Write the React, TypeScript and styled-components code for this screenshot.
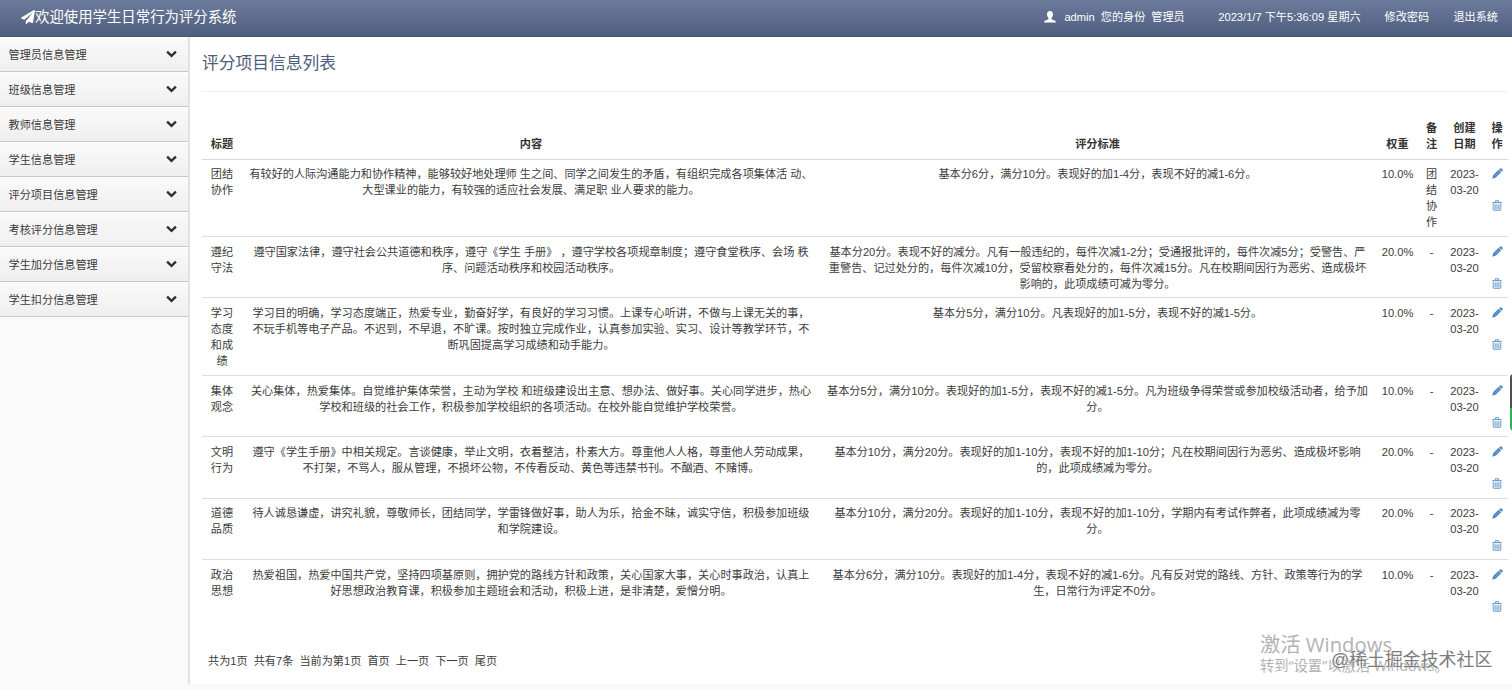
import React from 'react';
import styled, { createGlobalStyle } from 'styled-components';
import { FaPaperPlane } from 'react-icons/fa';

const GlobalStyle = createGlobalStyle`
  * { box-sizing: border-box; }
  html, body { margin: 0; padding: 0; }
  body {
    background: #fafafa;
    color: #3c3c3c;
    font-family: "Liberation Sans", "Noto Sans CJK SC", sans-serif;
    font-size: 11.15px;
    line-height: 16px;
    overflow: hidden;
  }
`;

const Page = styled.div`
  position: relative;
  display: flex;
  flex-direction: column;
  width: 1512px;
  height: 690px;
  overflow: hidden;
`;

const TopBar = styled.header`
  display: flex;
  flex: none;
  align-items: center;
  justify-content: space-between;
  height: 37px;
  padding: 0 14px 3px 21px;
  color: #fff;
  background: linear-gradient(to bottom, #6c7b9c, #505e7f);
  border-bottom: 1px solid #47536f;
`;

const Brand = styled.div`
  display: flex;
  align-items: center;
  font-size: 14.4px;
  white-space: nowrap;
`;

const UserNav = styled.nav`
  display: flex;
  align-items: center;
  white-space: nowrap;
`;

const NavText = styled.span<{ $gap: number }>`
  margin-left: ${(p) => p.$gap}px;
`;

const Body = styled.div`
  display: flex;
  flex: none;
  height: 647px;
`;

const Sidebar = styled.aside`
  flex: none;
  width: 190px;
  background: #fafafa;
  border-right: 2px solid #e2e2e2;
`;

const MenuItem = styled.div`
  display: flex;
  align-items: center;
  justify-content: space-between;
  height: 35.05px;
  padding: 1px 11px 0 8.6px;
  background: linear-gradient(to bottom, #fafafa, #efefef);
  border-bottom: 1px solid #c8c8c8;
  box-shadow: inset 0 1px 0 #fff;
`;

const Content = styled.main`
  flex: 1;
  padding: 14px 4px 0 12px;
  background: #fff;
`;

const Title = styled.h1`
  height: 40.5px;
  margin: 0;
  color: #505d7d;
  font-size: 16.75px;
  font-weight: 400;
  line-height: 25px;
  border-bottom: 1px solid #f0f0f0;
`;

const Table = styled.table`
  width: 1306px;
  margin-top: 21.5px;
  table-layout: fixed;
  border-collapse: separate;
  border-spacing: 0;
  text-align: center;
`;

const HeadCell = styled.th`
  height: 46.5px;
  padding: 0 0 7px;
  color: #333;
  font-weight: 700;
  vertical-align: bottom;
  border-bottom: 1px solid #d9d9d9;
`;

const Row = styled.tr<{ $height: number }>`
  height: ${(p) => p.$height}px;
`;

const Cell = styled.td<{ $last?: boolean }>`
  padding: 6.8px 0 0;
  vertical-align: top;
  white-space: nowrap;
  border-bottom: 1px solid ${(p) => (p.$last ? 'transparent' : '#dedede')};
`;

const Line = styled.div`
  display: flex;
  justify-content: center;
  height: 16px;
  white-space: pre;
`;

const Actions = styled.div`
  display: flex;
  flex-direction: column;
  align-items: center;
  gap: 21px;
  padding-top: 2.2px;
  color: #4a86c5;
`;

const Pager = styled.div`
  display: flex;
  gap: 6.1px;
  margin: 31.5px 0 0 6px;
`;

const Activation = styled.div`
  position: absolute;
  left: 1260px;
  top: 631px;
  color: #b2b2b2;
  font-family: "Open Sans", "Noto Sans CJK SC", sans-serif;
  white-space: nowrap;
`;

const ActivationTitle = styled.div`
  font-size: 20.3px;
  line-height: 26px;
`;

const ActivationHint = styled.div`
  font-size: 14.3px;
  line-height: 18px;
`;

const Community = styled.div`
  position: absolute;
  left: 1331px;
  top: 647px;
  color: #7c7c7c;
  font-size: 17.9px;
  line-height: 26px;
  white-space: nowrap;
  text-shadow: 0 0 1px #fff;
`;

const EdgeWidget = styled.div`
  position: absolute;
  left: 1510px;
  top: 374px;
  width: 4px;
  height: 57px;
  border-radius: 4px 0 0 4px;
  background: linear-gradient(to bottom, #505050 0 60%, #2fb457 60%);
`;

const UserIcon = () => (
  <svg width="12" height="12" viewBox="0 0 12 12" fill="currentColor">
    <path d="M6 0C4.1 0 3 1.3 3 3.4C3 5 3.7 6.1 4.5 6.8V8C4.3 8.5 3.3 8.8 2.1 9.3C0.8 9.8 0.1 10.1 0 11.6H12C11.9 10.1 11.2 9.8 9.9 9.3C8.7 8.8 7.7 8.5 7.5 8V6.8C8.3 6.1 9 5 9 3.4C9 1.3 7.9 0 6 0Z" />
  </svg>
);

const ChevronIcon = () => (
  <svg width="11" height="10" viewBox="0 0 11 10" fill="none" stroke="#2f2f2f">
    <path d="M1.1 1.6L5.5 5.9L9.9 1.6" strokeWidth="2.3" />
  </svg>
);

const PencilIcon = () => (
  <svg width="11" height="11" viewBox="0 0 11 11" fill="currentColor">
    <path d="M8 0.5Q8.7 -0.1 9.4 0.5L10.5 1.6Q11 2.2 10.5 2.9L9.5 3.8L7.1 1.4Z" />
    <path d="M6.6 1.8L9.1 4.3L3.9 9.6L0.2 10.8L1.3 7.1Z" />
    <path d="M3 7.9L7.3 3.6" stroke="#a8c8e8" strokeWidth="0.5" />
  </svg>
);

const TrashIcon = () => (
  <svg width="10" height="11" viewBox="0 0 10 11" fill="none" stroke="#5f95cc">
    <path d="M3.3 2V0.8H6.7V2M0.3 2.6H9.7" strokeWidth="1" />
    <path d="M1.2 3.4V9.6Q1.2 10.3 1.9 10.3H8.1Q8.8 10.3 8.8 9.6V3.4" strokeWidth="0.9" fill="#dce8f5" />
    <path d="M3.3 4.5V9M5 4.5V9M6.7 4.5V9" strokeWidth="0.7" />
  </svg>
);

const menu = [
  '管理员信息管理',
  '班级信息管理',
  '教师信息管理',
  '学生信息管理',
  '评分项目信息管理',
  '考核评分信息管理',
  '学生加分信息管理',
  '学生扣分信息管理',
];

const columns: { width: number; label: string[] }[] = [
  { width: 40, label: ['标题'] },
  { width: 578, label: ['内容'] },
  { width: 555, label: ['评分标准'] },
  { width: 45, label: ['权重'] },
  { width: 23, label: ['备', '注'] },
  { width: 43, label: ['创建', '日期'] },
  { width: 22, label: ['操', '作'] },
];

interface Item {
  height: number;
  title: string[];
  content: string[];
  standard: string[];
  weight: string;
  note: string[];
}

const items: Item[] = [
  {
    height: 77.6,
    title: ['团结', '协作'],
    content: [
      '有较好的人际沟通能力和协作精神，能够较好地处理师 生之间、同学之间发生的矛盾，有组织完成各项集体活 动、',
      '大型课业的能力，有较强的适应社会发展、满足职 业人要求的能力。',
    ],
    standard: ['基本分6分，满分10分。表现好的加1-4分，表现不好的减1-6分。'],
    weight: '10.0%',
    note: ['团', '结', '协', '作'],
  },
  {
    height: 61.4,
    title: ['遵纪', '守法'],
    content: [
      '遵守国家法律，遵守社会公共道德和秩序，遵守《学生 手册》 ，遵守学校各项规章制度；遵守食堂秩序、会场 秩',
      '序、问题活动秩序和校园活动秩序。',
    ],
    standard: [
      '基本分20分。表现不好的减分。凡有一般违纪的，每件次减1-2分；受通报批评的，每件次减5分；受警告、严',
      '重警告、记过处分的，每件次减10分，受留校察看处分的，每件次减15分。凡在校期间因行为恶劣、造成极坏',
      '影响的，此项成绩可减为零分。',
    ],
    weight: '20.0%',
    note: ['-'],
  },
  {
    height: 77.4,
    title: ['学习', '态度', '和成', '绩'],
    content: [
      '学习目的明确，学习态度端正，热爱专业，勤奋好学，有良好的学习习惯。上课专心听讲，不做与上课无关的事，',
      '不玩手机等电子产品。不迟到，不早退，不旷课。按时独立完成作业，认真参加实验、实习、设计等教学环节，不',
      '断巩固提高学习成绩和动手能力。',
    ],
    standard: ['基本分5分，满分10分。凡表现好的加1-5分，表现不好的减1-5分。'],
    weight: '10.0%',
    note: ['-'],
  },
  {
    height: 61.4,
    title: ['集体', '观念'],
    content: [
      '关心集体，热爱集体。自觉维护集体荣誉，主动为学校 和班级建设出主意、想办法、做好事。关心同学进步，热心',
      '学校和班级的社会工作，积极参加学校组织的各项活动。在校外能自觉维护学校荣誉。',
    ],
    standard: [
      '基本分5分，满分10分。表现好的加1-5分，表现不好的减1-5分。凡为班级争得荣誉或参加校级活动者，给予加',
      '分。',
    ],
    weight: '10.0%',
    note: ['-'],
  },
  {
    height: 61.4,
    title: ['文明', '行为'],
    content: [
      '遵守《学生手册》中相关规定。言谈健康，举止文明，衣着整洁，朴素大方。尊重他人人格，尊重他人劳动成果，',
      '不打架，不骂人，服从管理，不损坏公物，不传看反动、黄色等违禁书刊。不酗酒、不赌博。',
    ],
    standard: [
      '基本分10分，满分20分。表现好的加1-10分，表现不好的加1-10分；凡在校期间因行为恶劣、造成极坏影响',
      '的，此项成绩减为零分。',
    ],
    weight: '20.0%',
    note: ['-'],
  },
  {
    height: 61.4,
    title: ['道德', '品质'],
    content: [
      '待人诚恳谦虚，讲究礼貌，尊敬师长，团结同学，学雷锋做好事，助人为乐，拾金不昧，诚实守信，积极参加班级',
      '和学院建设。',
    ],
    standard: [
      '基本分10分，满分20分。表现好的加1-10分，表现不好的加1-10分，学期内有考试作弊者，此项成绩减为零',
      '分。',
    ],
    weight: '20.0%',
    note: ['-'],
  },
  {
    height: 61.4,
    title: ['政治', '思想'],
    content: [
      '热爱祖国，热爱中国共产党，坚持四项基原则，拥护党的路线方针和政策，关心国家大事，关心时事政治，认真上',
      '好思想政治教育课，积极参加主题班会和活动，积极上进，是非清楚，爱憎分明。',
    ],
    standard: [
      '基本分6分，满分10分。表现好的加1-4分，表现不好的减1-6分。凡有反对党的路线、方针、政策等行为的学',
      '生，日常行为评定不0分。',
    ],
    weight: '10.0%',
    note: ['-'],
  },
];

const pager = ['共为1页', '共有7条', '当前为第1页', '首页', '上一页', '下一页', '尾页'];

const Lines = ({ text }: { text: string[] }) => (
  <>
    {text.map((t, i) => (
      <Line key={i}>{t}</Line>
    ))}
  </>
);

export default function App() {
  return (
    <Page>
      <GlobalStyle />
      <TopBar>
        <Brand>
          <FaPaperPlane size={14} />
          欢迎使用学生日常行为评分系统
        </Brand>
        <UserNav>
          <UserIcon />
          <NavText $gap={8}>admin</NavText>
          <NavText $gap={6}>您的身份</NavText>
          <NavText $gap={6}>管理员</NavText>
          <NavText $gap={33.5}>2023/1/7 下午5:36:09 星期六</NavText>
          <NavText $gap={23.9}>修改密码</NavText>
          <NavText $gap={24.3}>退出系统</NavText>
        </UserNav>
      </TopBar>
      <Body>
        <Sidebar>
          {menu.map((m) => (
            <MenuItem key={m}>
              {m}
              <ChevronIcon />
            </MenuItem>
          ))}
        </Sidebar>
        <Content>
          <Title>评分项目信息列表</Title>
          <Table>
            <colgroup>
              {columns.map((c, i) => (
                <col key={i} width={c.width} />
              ))}
            </colgroup>
            <thead>
              <tr>
                {columns.map((c, i) => (
                  <HeadCell key={i}>
                    <Lines text={c.label} />
                  </HeadCell>
                ))}
              </tr>
            </thead>
            <tbody>
              {items.map((r, i) => {
                const last = i === items.length - 1;
                return (
                  <Row key={i} $height={r.height}>
                    <Cell $last={last}><Lines text={r.title} /></Cell>
                    <Cell $last={last}><Lines text={r.content} /></Cell>
                    <Cell $last={last}><Lines text={r.standard} /></Cell>
                    <Cell $last={last}>{r.weight}</Cell>
                    <Cell $last={last}><Lines text={r.note} /></Cell>
                    <Cell $last={last}><Lines text={['2023-', '03-20']} /></Cell>
                    <Cell $last={last}>
                      <Actions>
                        <PencilIcon />
                        <TrashIcon />
                      </Actions>
                    </Cell>
                  </Row>
                );
              })}
            </tbody>
          </Table>
          <Pager>
            {pager.map((p) => (
              <span key={p}>{p}</span>
            ))}
          </Pager>
        </Content>
      </Body>
      <Activation>
        <ActivationTitle>激活 Windows</ActivationTitle>
        <ActivationHint>转到“设置”以激活 Windows。</ActivationHint>
      </Activation>
      <Community>@稀土掘金技术社区</Community>
      <EdgeWidget />
    </Page>
  );
}
